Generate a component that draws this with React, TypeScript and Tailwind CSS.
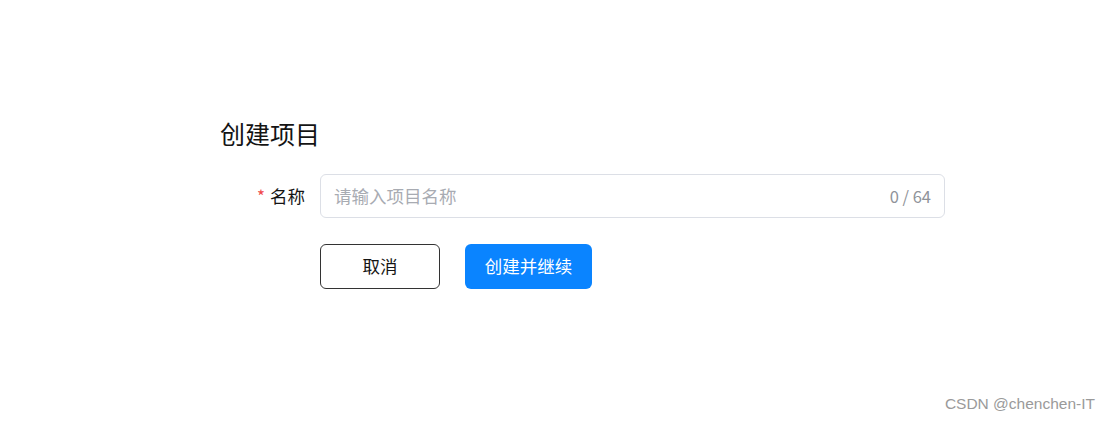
import React from "react";

const font = { fontFamily: '"Noto Sans CJK SC", "Noto Sans", sans-serif' };

export default function App() {
    return (
        <div className="relative w-[1110px] h-[423px] bg-white overflow-hidden" style={font}>
            <div className="pl-[220px] pt-[115px]">
                <h2 className="text-[25px] leading-[36px] text-[#141414] font-normal">创建项目</h2>

                <div className="mt-[23px] flex items-center">
                    <label className="w-[100px] pr-[15px] flex justify-end items-center text-[17.5px] text-[#141414]">
                        <span className="text-[#f0484a] mr-[5px] text-[17px]">*</span>
                        名称
                    </label>
                    <div className="w-[625px] h-[44px] border border-[#dcdfe6] rounded-[6px] flex items-center px-[13px]">
                        <input
                            className="flex-1 outline-none text-[17.5px] text-[#303133] placeholder:text-[#a8abb2] bg-transparent"
                            placeholder="请输入项目名称"
                        />
                        <span className="text-[16.5px] text-[#909399]">0 / 64</span>
                    </div>
                </div>

                <div className="mt-[26px] ml-[100px] flex gap-[25px]">
                    <button className="w-[120px] h-[45px] border border-[#333] rounded-[6px] text-[17.5px] text-[#141414] bg-white">
                        取消
                    </button>
                    <button className="w-[127px] h-[45px] rounded-[6px] text-[17.5px] text-white bg-[#0a84ff]">
                        创建并继续
                    </button>
                </div>
            </div>

            <div
                className="absolute right-[15px] bottom-[8px] text-[15.5px] text-[#9a9a9a]"
                style={{ fontFamily: '"Liberation Sans", Arial, sans-serif' }}
            >
                CSDN @chenchen-IT
            </div>
        </div>
    );
}
